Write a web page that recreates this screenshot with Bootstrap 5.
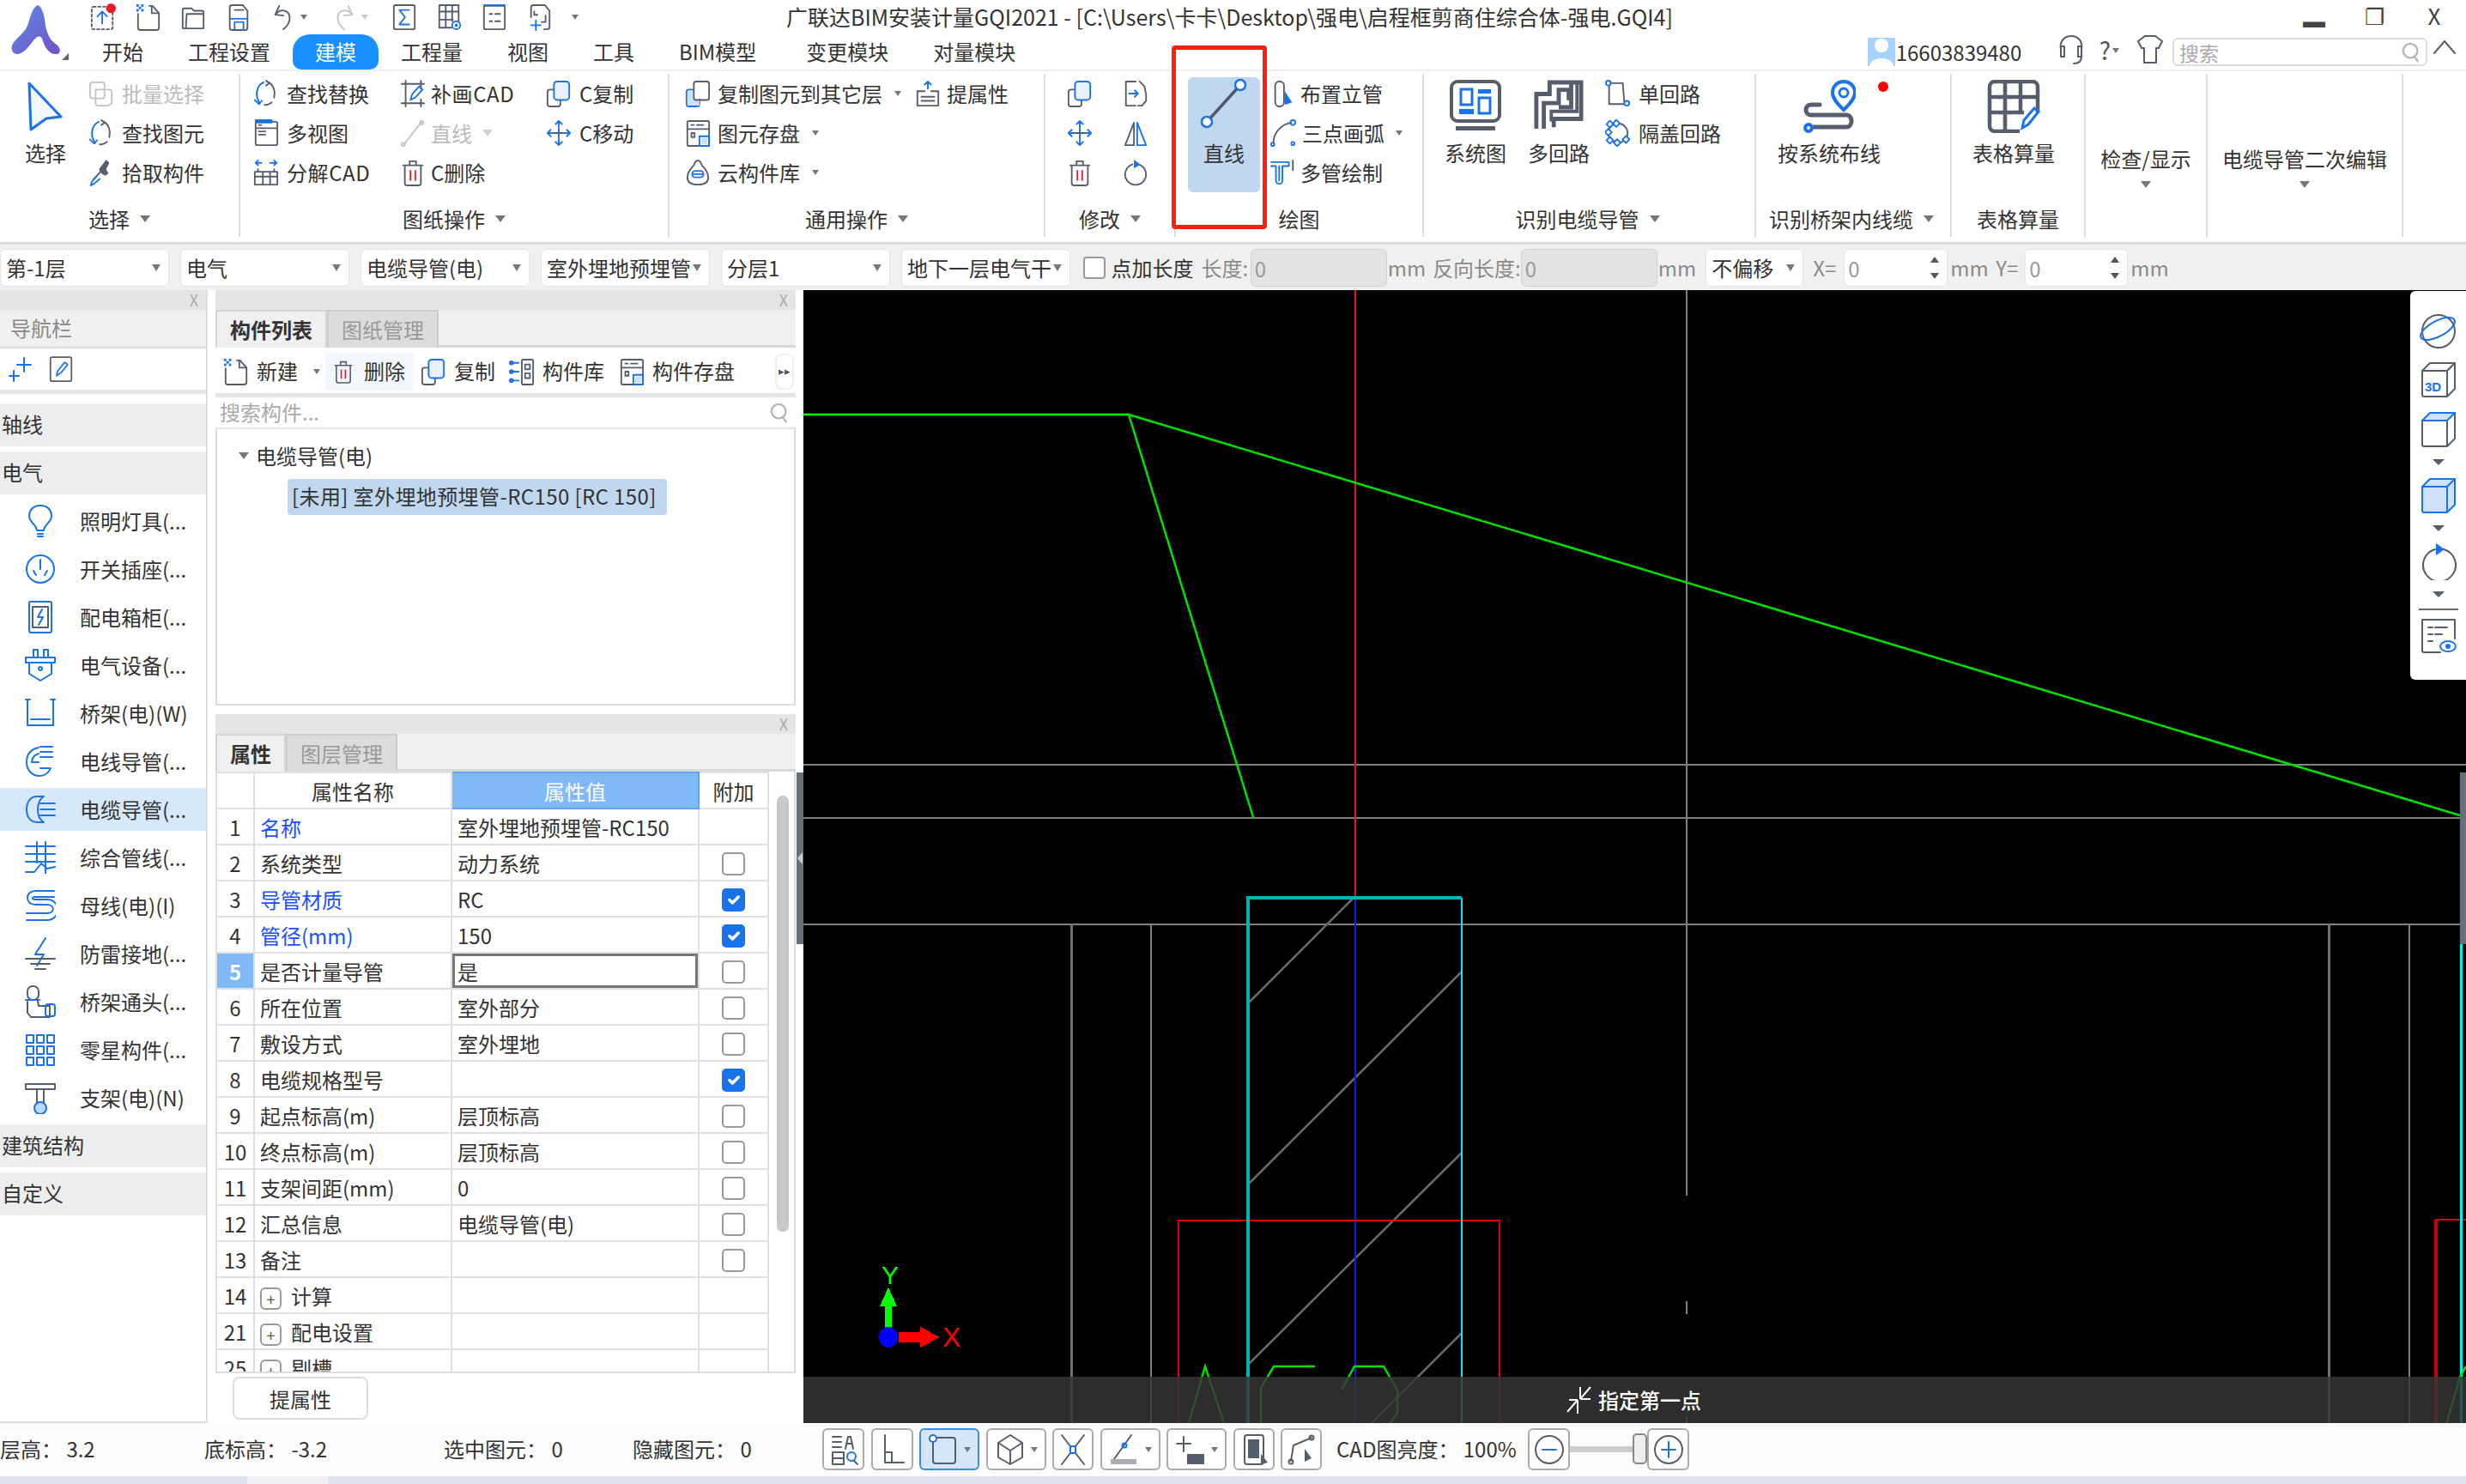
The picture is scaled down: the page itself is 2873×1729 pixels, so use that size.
<!DOCTYPE html>
<html lang="zh-CN">
<head>
<meta charset="utf-8">
<title>广联达BIM安装计量GQI2021</title>
<link rel="stylesheet" href="https://cdn.jsdelivr.net/npm/bootstrap@5.3.0/dist/css/bootstrap.min.css">
<style>
html,body{width:2873px;height:1729px;overflow:hidden}
body{font-family:"Noto Sans CJK SC","Noto Sans",sans-serif;font-size:24px;line-height:1.2;color:#333;background:#fff}
.i-d{fill:none;stroke:#565d6d;stroke-width:2;stroke-linejoin:round;stroke-linecap:round}
.i-t{fill:none;stroke:#565d6d;stroke-width:4}
.i-b{fill:none;stroke:#1a73e8;stroke-width:2;stroke-linejoin:round;stroke-linecap:round}
.i-g{fill:none;stroke:#c4c4c4;stroke-width:2;stroke-linejoin:round;stroke-linecap:round}
.i-r{fill:none;stroke:#e0202a;stroke-width:2}
.i-fb{fill:#1a73e8}.i-fl{fill:#cfe1f9}.i-fd{fill:#565d6d}.i-fw{fill:#fff}
.caret-d{display:inline-block;width:0;height:0;border-left:6px solid transparent;border-right:6px solid transparent;border-top:8px solid #777;flex:none}
.caret-s{border-left-width:4px;border-right-width:4px;border-top-width:6px}
.caret-u{display:block;width:0;height:0;border-left:5px solid transparent;border-right:5px solid transparent;border-bottom:7px solid #555}
.caret-dn{display:block;width:0;height:0;border-left:5px solid transparent;border-right:5px solid transparent;border-top:7px solid #555}

/* title + tabs */
.top-wrap{height:81px}
.logo-col{width:93px;flex:none;padding:6px 0 0 13px;position:relative}
.logo-col .caret-corner{position:absolute;left:72px;top:62px;width:0;height:0;border-left:8px solid transparent;border-bottom:8px solid #666}
.title-row{height:40px}
.quick{flex:0 0 823px;padding-left:12px;gap:22.5px}
.quick svg{width:30px;height:32px;flex:none}
.quick-w{width:48px;gap:5px}
.app-title{white-space:nowrap;padding-top:4px;font-size:25px;color:#333;width:1100px;flex:none}
.win-btns{margin-left:auto;padding-right:2px}
.win-b{width:70px;text-align:center;color:#444;font-size:26px;line-height:36px}
.tab-row{height:41px}
.rtabs .nav-link{padding:0 26px;height:41px;line-height:40px;color:#333;font-size:24px;white-space:nowrap}
.rtabs .nav-link.wide{padding-right:32px}
.rtabs .nav-link.active{background:#1890ff;color:#fff;border-radius:20px 20px 10px 10px}
.user-zone{margin-left:auto;padding-right:11px;height:41px}
.avatar{width:32px;height:33px;background:#a9d3ff;flex:none;display:block;margin-top:4px}
.ph{margin-left:1px;width:163px;color:#333;line-height:42px}
.top-search{width:297px;height:33px;margin:4px 6px 0 11px;border:2px solid #ddd;border-radius:6px;color:#aaa;padding:0 6px;justify-content:space-between;background:#fff}
.top-search span{font-size:23px;line-height:28px}

/* ribbon */
.ribbon{height:204px;border-top:2px solid #eee;border-bottom:3px solid #d8d8d8;padding-top:3px;position:relative;background:#fff}
.rb-group{height:190px;border-right:2px solid #dcdcdc;flex:none;position:relative}
.rb-body{height:150px}
.rb-label{height:38px;color:#333;gap:12px;white-space:nowrap}
.rb-col{display:flex;flex-direction:column;flex:none}
.rb-it{height:46px;display:flex;align-items:center;gap:9px;white-space:nowrap;flex:none}
.rb-it svg{width:30px;height:32px;flex:none}
.rb-it .caret-d{margin-left:6px}
.rb-off{color:#bbb}
.ls{letter-spacing:.6px}
.big{display:flex;flex-direction:column;align-items:center;padding-top:8px;flex:none;white-space:nowrap}
.big-ico{height:60px;display:flex;align-items:center;justify-content:center;margin-bottom:10px}
.big-hl{background:#c0d7f0;border-radius:6px;width:84px;height:134px;margin-top:4px;padding-top:2px}
.alert-dot{position:absolute;left:142px;top:9px;width:12px;height:12px;border-radius:50%;background:#f00}
.red-box{position:absolute;left:1365px;width:111px;height:214px;border:5px solid #ff2015;border-radius:4px;pointer-events:none}

/* property toolbar */
.prop-bar{height:53px;background:#f0f0f0;padding:1px 0 0;align-items:center}
.tb-sel{width:196.5px;height:44px;font-size:24px;line-height:1.2;color:#333;padding:0 20px 0 6px;border:1px solid #e4e4e4;border-radius:6px;flex:none;background-position:right 8px center;background-size:12px 8px;background-image:url("data:image/svg+xml,%3csvg xmlns='http://www.w3.org/2000/svg' viewBox='0 0 12 8'%3e%3cpath fill='%23777' d='M1 0h10L6 8z'/%3e%3c/svg%3e")}
.tb-gap{margin-right:13.5px}
.tb-check.form-check-input{width:26px;height:26px;margin:0 7px 0 15px;border:2px solid #999;border-radius:4px;flex:none;background-color:#fff}
.tb-g{color:#8a8a8a;white-space:nowrap}
.tb-inp.form-control{height:44px;font-size:24px;color:#999;padding:0 4px;border-radius:6px;flex:none;border:1px solid #e4e4e4;background:#fff}
.tb-inp.form-control:disabled{background:#e3e3e3;border-color:#c9d2de}
.spin-w{position:relative;flex:none}
.spin{position:absolute;right:10px;top:9px;height:26px;display:flex;flex-direction:column;justify-content:space-between}

/* workspace */
.workspace{height:1320px}
.left-col{width:242px;flex:none;border-right:2px solid #ddd;border-bottom:2px solid #ddd;height:1320px}
.pan-head{height:23px;background:#e5e5e5;justify-content:flex-end;padding-right:9px;color:#aaa;font-size:18px;line-height:23px}
.nav-title{height:45px;background:#f0f0f0;border-bottom:2px solid #ddd;color:#888;padding-left:12px;line-height:42px}
.nav-tools{height:53px;border-bottom:5px solid #e4e4e4;padding-left:10px;gap:19px}
.nav-tools svg{width:28px;height:32px}
.sect{height:50px;background:#ededed;padding-left:2px;line-height:48px;color:#333}
.sect-a{margin-top:11px}.sect-b{margin-top:6px}
.nav-list.list-group{--bs-list-group-bg:transparent;border-radius:0;margin-top:6px}
.nav-list .list-group-item{height:50px;margin-bottom:6px;padding:0 0 0 29px;border:0;display:flex;align-items:center;gap:28px;color:#333;white-space:nowrap;background:transparent}
.nav-list .list-group-item.active{background:#d6e8fb;color:#333;margin-top:0}
.nav-list svg{width:36px;height:38px;flex:none}
.gutter{width:9px;flex:none}
.mid-col{width:676px;flex:none;height:1320px}
.ptabs.nav-tabs{height:44px;background:#f0f0f0;border-bottom:3px solid #d8d8d8;--bs-nav-tabs-border-width:0}
.ptabs .nav-link{height:44px;width:130px;padding:0;line-height:42px;text-align:center;font-size:24px;color:#999;background:#dcdcdc;border:2px solid #ccc;border-radius:0;border-bottom:0}
.ptabs .nav-link.active{color:#333;font-weight:700;background:#f0f0f0;border-color:#d4d4d4;margin:0}
.ptabs.short .nav-link.active{width:82px}
.mid-tools{height:56px;border-bottom:5px solid #e4e4e4;padding:0 2px 0 9px;margin-top:2px;align-items:center;position:relative}
.mid-tools .t-it{display:flex;align-items:center;gap:9px;height:44px;white-space:nowrap;flex:none}
.mid-tools svg{width:30px;height:34px;flex:none}
.mid-tools .t-hover{background:#f2f8fe;border-radius:4px;padding:0 8px 0 9px;width:104px;gap:11px}
.mid-tools .t-hover svg{width:26px}
.more-b{position:absolute;right:2px;top:5px;width:22px;height:42px;border:2px solid #eee;border-radius:8px;text-align:center;line-height:36px;font-size:13px;color:#555}
.mid-search{height:37px;padding:0 8px 0 5px;border-bottom:2px solid #e4e4e4;color:#aaa;justify-content:space-between;align-items:center;margin-top:0}
.tree{height:322px;border:2px solid #ddd;border-top:0;padding:10px 0 0 25px}
.tree-top{height:42px;gap:8px;display:flex;align-items:center}
.tree-sel{margin:6px 0 0 57px;width:442px;height:42px;background:#c0d7f0;border-radius:4px;line-height:40px;padding-left:5px;white-space:nowrap;color:#333;letter-spacing:.4px}
.pan-b{margin-top:10px}
.prop-wrap{height:701px;border-bottom:2px solid #ddd;border-right:2px solid #ddd;overflow:hidden;position:relative}
.prop-table.table{width:643px;table-layout:fixed;margin:0;--bs-table-border-color:#e0e0e0;color:#333;border-collapse:collapse}
.prop-table.table>*>*>*{height:42px;padding:1px 6px 0;border-width:2px;vertical-align:middle;white-space:nowrap;overflow:hidden;line-height:38px;font-weight:400;color:#333}
.prop-table.table>*>*>.num{text-align:center;padding:1px 0 0}
.prop-table.table>*>*>.lnk{color:#1a50ff}
.prop-table.table>*>*>.hd-act{background:#7fb9f8;color:#fff;text-align:center;border:2px solid #5ea4ee}
.prop-table.table>*>*>.num-act{background:#7fb9f8;color:#fff;font-weight:700}
.prop-table.table>*>*>.edit{box-shadow:inset 0 0 0 3px #777}
.prop-table.table>*>*>.chk{text-align:center;padding:0}
.prop-table .form-check-input{width:27px;height:27px;margin:7px 0 0;border:2px solid #999;border-radius:5px;float:none;opacity:1}
.prop-table .form-check-input:checked{background-color:#1a73e8;border-color:#1a73e8}
.plus{display:inline-flex;width:25px;height:26px;border:2px solid #999;border-radius:6px;align-items:center;justify-content:center;font-size:18px;line-height:1;margin-right:11px;color:#555;vertical-align:middle}
.scr-thumb{position:absolute;left:654px;top:28px;width:14px;height:508px;background:#c8c8c8;border-radius:7px 7px 6px 6px}
.prop-btn.btn{width:158px;height:50px;margin:4px 0 0 20px;padding:2px 0 0;border:2px solid #ddd;border-radius:8px;font-size:24px;color:#333;background:#fff}
.split-w{width:9px;flex:none;padding-top:562px}
.split{height:200px;width:8px;margin-left:1px;background:#66707a;display:flex;align-items:center;justify-content:center}
.canvas-w{flex:1 1 auto;position:relative;background:#000;height:1320px;overflow:hidden}
.canvas-w>svg{display:block;width:1937px;height:1320px}
.cmd{position:absolute;left:0;right:0;bottom:0;height:54px;background:rgba(54,54,54,.83);color:#fff;display:flex;align-items:center;padding-left:889px;gap:7px;font-weight:500}
.r-split{position:absolute;right:0;top:562px;width:7px;height:200px;background:#66707a}
.view-strip{position:absolute;right:0;top:1px;width:65px;height:453px;background:#fff;border-radius:6px 0 0 6px;display:flex;flex-direction:column;align-items:center;padding-top:24px;padding-left:1px}
.view-strip svg{width:44px;height:44px;flex:none;display:block}
.view-strip .caret-dn{border-left-width:7px;border-right-width:7px;border-top-width:7px;margin:13px 0;border-top-color:#565d6d}
.vs-sep{width:46px;border-top:2px solid #666;margin:0 0 8px}

/* status */
.status-b{height:62px;background:#fcfcfc;align-items:flex-start}
.st-txt{white-space:nowrap;line-height:60px;flex:none}
.st-btn.btn{height:49px;margin-top:6px;padding:0;border:2px solid #aaa;border-radius:6px;flex:none;background:#fff;display:flex;align-items:center;justify-content:center;gap:6px}
.st-btn.btn.on{background:#d5e5fa;border-color:#3b8beb}
.st-btn svg{width:36px;height:38px;flex:none}
.track{width:73px;height:7px;background:#ccc;margin-top:27px;flex:none}
.thumb-v{width:17px;height:36px;margin-top:12px;background:#eee;border:2px solid #888;border-radius:5px;flex:none}
.strip{height:9px;background:#dfe3ee}
.strip i{display:block;width:95px;height:9px;margin-left:288px;background:#eef0f6}
</style>
</head>
<body>
<svg class="d-none" xmlns="http://www.w3.org/2000/svg">
<symbol id="s-up" viewBox="0 0 32 34"><rect class="i-d" x="2" y="4" width="26" height="28" rx="2" stroke-dasharray="3 3"/><path class="i-b" stroke-width="3" d="M15 25V11M9 16l6-6 6 6"/><circle cx="26" cy="6" r="6" fill="#f0182a"/></symbol>
<symbol id="s-new" viewBox="0 0 32 34"><path class="i-d" d="M17 3h4l8 9v18a3 3 0 0 1-3 3H6a3 3 0 0 1-3-3V13"/><path class="i-d" d="M20 3v9h9"/><rect class="i-fb" x="1" y="1" width="3" height="3"/><rect class="i-fb" x="7" y="1" width="3" height="3"/><rect class="i-fb" x="4" y="4" width="3" height="3"/><rect class="i-fb" x="1" y="7" width="3" height="3"/><rect class="i-fb" x="7" y="7" width="3" height="3"/></symbol>
<symbol id="s-open" viewBox="0 0 32 34"><path class="i-d" d="M3 30V8a2 2 0 0 1 2-2h9l3 3h10a2 2 0 0 1 2 2v19a1 1 0 0 1-1 1H4a1 1 0 0 1-1-1zM7 30l1-17h21"/></symbol>
<symbol id="s-save" viewBox="0 0 32 34"><path class="i-d" d="M8 2h13l6 7v21a3 3 0 0 1-3 3H8a3 3 0 0 1-3-3V5a3 3 0 0 1 3-3zM11 8h11"/><path class="i-b" d="M5 19h22M11 33V23h11v10"/></symbol>
<symbol id="s-undo" viewBox="0 0 32 34"><path class="i-d" d="M11 3L6 14l10 1M7 13c7-8 17-4 17 5 0 6-4 11-8 14"/></symbol>
<symbol id="s-redo" viewBox="0 0 32 34"><path class="i-g" d="M21 3l5 11-10 1M25 13c-7-8-17-4-17 5 0 6 4 11 8 14"/></symbol>
<symbol id="s-sig" viewBox="0 0 32 34"><rect class="i-d" x="3" y="2" width="26" height="30" rx="2"/><path class="i-b" stroke-width="2.5" d="M22 8H10l7 9-7 9h12"/></symbol>
<symbol id="s-tbl" viewBox="0 0 32 34"><path class="i-d" d="M3 2h24v20M3 2v28h15M3 10h24M3 20h17M11 2v28M19 2v20"/><circle class="i-b" cx="24" cy="27" r="5"/><circle class="i-fb" cx="24" cy="27" r="2"/></symbol>
<symbol id="s-lst" viewBox="0 0 32 34"><rect class="i-d" x="3" y="3" width="26" height="29" rx="2"/><path class="i-b" stroke-width="3" d="M3 2h26"/><path class="i-d" d="M10 13h3M17 13h6M10 22h3M17 22h6"/></symbol>
<symbol id="s-crop" viewBox="0 0 32 34"><path class="i-d" d="M8 2h14l6 7v20a3 3 0 0 1-3 3h-4M8 2a3 3 0 0 0-3 3v12M9 10v4h4M23 15v8h-5"/><path class="i-b" stroke-width="3" d="M11 21v12M5 27h12"/></symbol>
<symbol id="s-sel" viewBox="0 0 42 58"><path fill="#f2f7fe" stroke="#1a73e8" stroke-width="3" stroke-linejoin="round" d="M2 2l37 39-17 2L4 56z"/></symbol>
<symbol id="s-batch" viewBox="0 0 32 34"><rect class="i-g" x="2" y="3" width="18" height="20" rx="3"/><path class="i-g" d="M9 12h17a3 3 0 0 1 3 3v14l-4 3H12a3 3 0 0 1-3-3z"/></symbol>
<symbol id="s-find" viewBox="0 0 32 34"><path class="i-b" d="M13 3C6 6 3 14 5 22l3 8"/><path class="i-d" d="M19 3c6 3 9 11 7 19M14 31c4 1 7-2 9-3"/><path class="i-b" d="M2 25l5 5 4-4"/><path class="i-d" d="M16 1l4 3-4 3"/></symbol>
<symbol id="s-pick" viewBox="0 0 32 34"><path class="i-fd" d="M22 1l4 4-4 8 3 5-4 3-5-3-3-5z"/><path class="i-d" stroke-width="3" d="M17 14L6 26"/><path class="i-b" stroke-width="3" d="M10 22l-6 7-1 4 4-2 7-6"/></symbol>
<symbol id="s-cad" viewBox="0 0 32 34"><path class="i-d" d="M2 5h28M2 29h28M7 1v32M26 1v10M26 24v9"/><path class="i-b" d="M13 25l2-7 9-10 4 4-9 10z"/></symbol>
<symbol id="s-mv" viewBox="0 0 32 34"><rect class="i-d" x="3" y="3" width="27" height="29" rx="2"/><rect class="i-b" x="3" y="1" width="20" height="3"/><path class="i-d" d="M3 11h26M7 7h3M7 15h8M7 19h8"/></symbol>
<symbol id="s-lg" viewBox="0 0 32 34"><path class="i-g" stroke-width="2.5" d="M27 3L5 31"/><circle class="i-g" cx="27" cy="4" r="2"/><circle class="i-g" cx="4" cy="31" r="2"/></symbol>
<symbol id="s-split" viewBox="0 0 32 34"><path class="i-b" d="M10 5H3M3 5l3-3M3 5l3 3M21 5h8M29 5l-3-3M29 5l-3 3"/><path class="i-d" d="M2 16h28v16H2zM2 22h28M12 16v16M21 16v16M6 16v-3M26 16v-3"/></symbol>
<symbol id="s-del" viewBox="0 0 32 34"><path class="i-d" d="M4 8h24M12 8V3h8v5M6 8v22a3 3 0 0 0 3 3h14a3 3 0 0 0 3-3V8"/><path class="i-r" d="M13 14v13M19 14v13"/></symbol>
<symbol id="s-copy" viewBox="0 0 32 34"><path class="i-d" d="M10 12H5a3 3 0 0 0-3 3v15a3 3 0 0 0 3 3h10a3 3 0 0 0 3-3v-6"/><rect class="i-b" stroke-width="2.5" x="10" y="2" width="19" height="23" rx="4" style="fill:#e8f1fd"/></symbol>
<symbol id="s-copyf" viewBox="0 0 32 34"><path class="i-b" d="M10 12H5a3 3 0 0 0-3 3v15a3 3 0 0 0 3 3h10a3 3 0 0 0 3-3v-6"/><path class="i-fl" d="M3 14h7v11h8v7H3z"/><rect class="i-d" x="11" y="2" width="19" height="23" rx="3"/></symbol>
<symbol id="s-move" viewBox="0 0 32 34"><path class="i-b" d="M16 2v30M2 17h28M12 6l4-4 4 4M12 28l4 4 4-4M6 13l-4 4 4 4M26 13l4 4-4 4"/><path class="i-d" d="M11 17h10"/></symbol>
<symbol id="s-store" viewBox="0 0 32 34"><rect class="i-d" x="3" y="2" width="27" height="31" rx="2"/><path class="i-d" d="M3 12h27M8 7h3M15 7h8M8 17h4v5H8z"/><rect class="i-b" x="18" y="21" width="12" height="12"/><rect class="i-fl" x="20" y="23" width="8" height="8"/></symbol>
<symbol id="s-cloud" viewBox="0 0 32 34"><path class="i-d" d="M16 2c3 0 4 3 5 6 3 3 8 8 8 15 0 6-4 9-13 9S3 29 3 23c0-7 5-12 8-15 1-3 2-6 5-6z"/><rect class="i-b" x="9" y="15" width="14" height="8" rx="4"/><path class="i-b" d="M10 19h12"/></symbol>
<symbol id="s-prop" viewBox="0 0 32 34"><path class="i-b" stroke-width="2.5" d="M16 11V2M12 6l4-4 4 4"/><path class="i-d" d="M12 14H3v18h26V14h-9M8 21h16M8 26h16"/></symbol>
<symbol id="s-flip" viewBox="0 0 32 34"><path class="i-d" d="M16 2H4v30h12M21 2l6 6 2 10v8l-5 6h-5"/><path class="i-b" d="M8 17h11M15 13l4 4-4 4"/></symbol>
<symbol id="s-mir" viewBox="0 0 32 34"><path class="i-d" stroke-width="2.5" d="M14 4L3 32h11z"/><path class="i-b" stroke-width="2.5" d="M18 4l11 28H18z"/></symbol>
<symbol id="s-rot" viewBox="0 0 32 34"><path class="i-d" d="M12 7a13 13 0 1 0 8 0"/><path class="i-fb" d="M14 1l8 6-8 5z"/></symbol>
<symbol id="s-riser" viewBox="0 0 32 34"><rect class="i-d" x="6" y="2" width="11" height="31" rx="5"/><path class="i-fb" d="M18 14l9 14-9 3z"/></symbol>
<symbol id="s-arc" viewBox="0 0 32 34"><path class="i-d" stroke-width="2.5" d="M4 28C4 16 14 6 26 4"/><circle class="i-b" cx="28" cy="4" r="3"/><circle class="i-b" cx="3" cy="31" r="2"/><circle class="i-b" cx="28" cy="30" r="2"/></symbol>
<symbol id="s-mpipe" viewBox="0 0 32 34"><path class="i-b" stroke-width="2.5" d="M1 4h22v5h-8v18a4 4 0 0 1-8 0V9H1"/><path class="i-b" d="M11 9v18"/><path class="i-d" d="M28 2v12"/></symbol>
<symbol id="s-1loop" viewBox="0 0 32 34"><path class="i-d" d="M5 4h17l2 26H5z"/><circle class="i-b" cx="4" cy="4" r="3" style="fill:#fff"/><circle class="i-b" cx="27" cy="29" r="3" style="fill:#fff"/></symbol>
<symbol id="s-sep" viewBox="0 0 32 34"><circle class="i-d" stroke-width="2" cx="16" cy="17" r="12"/><g class="i-b" stroke-width="2"><rect x="3" y="3" width="6" height="6" transform="rotate(45 6 6)" style="fill:#fff"/><rect x="11" y="2" width="6" height="6" transform="rotate(45 14 5)" style="fill:#fff"/><rect x="1" y="13" width="6" height="6" transform="rotate(45 4 16)" style="fill:#fff"/><rect x="3" y="23" width="6" height="6" transform="rotate(45 6 26)" style="fill:#fff"/><rect x="12" y="26" width="6" height="6" transform="rotate(45 15 29)" style="fill:#fff"/><rect x="23" y="22" width="6" height="6" transform="rotate(45 26 25)" style="fill:#fff"/></g></symbol>
<symbol id="s-sys" viewBox="0 0 60 62"><rect fill="none" stroke="#565d6d" stroke-width="4" x="2" y="2" width="56" height="46" rx="7"/><path class="i-fd" d="M7 54h46v5H7z"/><rect fill="none" stroke="#1a73e8" stroke-width="3" x="13" y="11" width="13" height="18"/><rect class="i-fb" x="11" y="34" width="17" height="6"/><rect class="i-fb" x="33" y="11" width="15" height="5"/><rect fill="none" stroke="#1a73e8" stroke-width="3" x="34" y="21" width="13" height="18"/></symbol>
<symbol id="s-mloop" viewBox="0 0 60 62"><path fill="none" stroke="#565d6d" stroke-width="5" d="M3 58V16h16V2h38v44H24v10"/><path fill="none" stroke="#565d6d" stroke-width="5" d="M12 58V27h18V11h12v10H46M45 2v30H30"/><path fill="none" stroke="#565d6d" stroke-width="4" d="M52 2v35H21v12"/></symbol>
<symbol id="s-route" viewBox="0 0 62 62"><path fill="none" stroke="#565d6d" stroke-width="5" stroke-linecap="round" d="M20 29H10C2 29 2 41 10 41h41c8 0 8 14 0 14H13"/><path fill="none" stroke="#1a73e8" stroke-width="4" d="M48 2c-7 0-13 5-13 13 0 8 8 15 13 20 5-5 13-12 13-20 0-8-6-13-13-13z"/><circle fill="none" stroke="#1a73e8" stroke-width="3" cx="48" cy="15" r="5"/><circle fill="#fff" stroke="#1a73e8" stroke-width="4" cx="7" cy="56" r="4"/></symbol>
<symbol id="s-gt" viewBox="0 0 60 62"><path fill="none" stroke="#565d6d" stroke-width="4.5" d="M37 60H8a6 6 0 0 1-6-6V8a6 6 0 0 1 6-6h44a6 6 0 0 1 6 6v30M2 20h56M2 38h40M20 2v58M38 2v36"/><path fill="none" stroke="#1a73e8" stroke-width="3" d="M40 56l2-9 12-14 5 4-12 15z"/></symbol>
<symbol id="s-spark" viewBox="0 0 28 32"><path class="i-b" stroke-width="3" d="M18 3v16M10 11h16M6 18v12M1 24h11"/></symbol>
<symbol id="s-edit" viewBox="0 0 32 34"><rect class="i-d" x="2" y="1" width="28" height="32" rx="2"/><path class="i-b" d="M10 26l2-7 9-11 4 3-9 11z"/></symbol>
<symbol id="s-lib" viewBox="0 0 32 34"><rect class="i-d" x="16" y="2" width="14" height="31" rx="2"/><rect class="i-d" x="20" y="8" width="6" height="6"/><rect class="i-d" x="20" y="19" width="6" height="6"/><path class="i-b" d="M2 6h10M2 17h10M2 28h10"/><circle class="i-b" cx="3" cy="6" r="2"/><circle class="i-b" cx="3" cy="17" r="2"/><circle class="i-b" cx="3" cy="28" r="2"/></symbol>
<symbol id="s-bulb" viewBox="0 0 36 38"><path class="i-b" d="M18 1C9 1 5 7 5 13c0 8 8 9 9 17h8c1-8 9-9 9-17 0-6-4-12-13-12zM15 34h6"/><path class="i-b" stroke-width="3" d="M15 37h6"/></symbol>
<symbol id="s-sock" viewBox="0 0 36 38"><circle class="i-b" cx="18" cy="19" r="16"/><path class="i-b" d="M18 8v11M10 21l3 5M26 21l-3 5"/></symbol>
<symbol id="s-box" viewBox="0 0 36 38"><rect class="i-b" x="5" y="1" width="26" height="36" rx="2" stroke-width="2.5"/><rect class="i-d" x="9" y="7" width="18" height="24"/><path class="i-b" d="M20 10l-5 9h6l-5 9"/></symbol>
<symbol id="s-plug" viewBox="0 0 36 38"><path class="i-b" stroke-width="2.5" d="M10 1v9h5V1zM22 1v9h5V1zM1 10h34v6H1zM5 16v13l13 8 13-8V16"/><circle class="i-b" cx="18" cy="23" r="2"/></symbol>
<symbol id="s-tray" viewBox="0 0 36 38"><path class="i-b" stroke-width="3" d="M3 3v30h30V3M1 3h5M30 3h5M7 26h22"/></symbol>
<symbol id="s-wire" viewBox="0 0 36 38"><path class="i-b" stroke-width="2.5" d="M16 3C7 5 2 11 2 20c0 10 7 16 15 16 7 0 11-4 13-9M16 20h-8c0-4 2-8 8-10M18 2h14M18 8h14M18 14h14M28 27h-10"/></symbol>
<symbol id="s-cable" viewBox="0 0 36 38"><path class="i-b" stroke-width="2.5" d="M22 4H14C6 4 2 11 2 19s4 15 12 15h8M22 4c-5 3-7 9-7 15s2 12 7 15"/><path class="i-b" stroke-width="2.5" d="M18 12h17M18 19h17M18 26h17"/></symbol>
<symbol id="s-comb" viewBox="0 0 36 38"><path class="i-b" stroke-width="2.5" d="M1 6h34M1 15h34M1 24h34M14 1v24M24 1v37M1 36h10l8-10 7 6 9-2"/></symbol>
<symbol id="s-bus" viewBox="0 0 36 38"><path class="i-b" stroke-width="2.5" d="M34 2H12C0 2 0 18 12 18h14c9 0 9 10 0 10H2M34 9H12c-4 0-4 3 0 3h14c16 0 16 24 0 24H2"/></symbol>
<symbol id="s-lit" viewBox="0 0 36 38"><path class="i-b" stroke-width="2.5" d="M24 1L12 20h10L14 33"/><path class="i-d" d="M1 25h34M7 31h22M12 37h12"/></symbol>
<symbol id="s-elb" viewBox="0 0 36 38"><rect class="i-d" x="3" y="1" width="13" height="16" rx="6"/><path class="i-b" stroke-width="3" d="M1 17h16"/><path class="i-d" d="M3 19v13l4 5h22V24H16l-1-6"/><rect class="i-b" x="24" y="22" width="11" height="14" rx="3"/></symbol>
<symbol id="s-grid" viewBox="0 0 36 38"><g class="i-b" stroke-width="2.5"><rect x="2" y="2" width="8" height="9"/><rect x="14" y="2" width="8" height="9"/><rect x="26" y="2" width="8" height="9"/><rect x="2" y="15" width="8" height="9"/><rect x="14" y="15" width="8" height="9"/><rect x="26" y="15" width="8" height="9"/><rect x="2" y="28" width="8" height="9"/><rect x="14" y="28" width="8" height="9"/><rect x="26" y="28" width="8" height="9"/></g></symbol>
<symbol id="s-t" viewBox="0 0 36 38"><path class="i-d" stroke-width="3" d="M1 3h34v6H1zM14 9v17M22 9v17"/><ellipse cx="18" cy="31" rx="7" ry="7" fill="#bcd8fa" stroke="#1a73e8" stroke-width="2"/></symbol>
<symbol id="s-q" viewBox="0 0 24 28"><circle fill="none" stroke="#b5b5b5" stroke-width="2.5" cx="11" cy="12" r="9"/><path fill="none" stroke="#b5b5b5" stroke-width="2.5" d="M16 19l5 7"/></symbol>
<symbol id="s-orbit" viewBox="0 0 44 44"><circle class="i-d" cx="22" cy="23" r="19"/><ellipse class="i-b" stroke-width="2.5" cx="21" cy="20" rx="22" ry="9" transform="rotate(-28 21 20)"/></symbol>
<symbol id="s-3d" viewBox="0 0 44 44"><path class="i-d" d="M3 12L12 3h29v30l-9 9H5a2 2 0 0 1-2-2zM3 12h29v30M32 12l9-9"/><text x="6" y="36" font-family="Liberation Sans,sans-serif" font-weight="700" font-size="15" fill="#1a73e8">3D</text></symbol>
<symbol id="s-ctop" viewBox="0 0 44 44"><path class="i-fl" d="M3 12L12 3h29l-9 9z"/><path class="i-d" d="M3 12v28a2 2 0 0 0 2 2h27l9-9V3M32 12v30"/><path class="i-b" d="M3 12L12 3h29l-9 9z"/></symbol>
<symbol id="s-cfull" viewBox="0 0 44 44"><path class="i-fl" d="M3 12L12 3h29v30l-9 9H3z"/><path class="i-b" stroke-width="2.5" d="M3 12L12 3h29v30l-9 9H5a2 2 0 0 1-2-2zM3 12h29v30M32 12l9-9"/></symbol>
<symbol id="s-rotv" viewBox="0 0 44 44"><path class="i-d" d="M18 8a19 19 0 1 0 10 0"/><path class="i-fb" d="M19 1l10 7-10 7z"/></symbol>
<symbol id="s-doce" viewBox="0 0 44 44"><path class="i-d" d="M24 41H5a2 2 0 0 1-2-2V3h38v22M10 12h5M18 12h14M10 20h5M18 20h8M10 28h5"/><ellipse class="i-b" cx="33" cy="34" rx="9" ry="6"/><circle class="i-fb" cx="33" cy="34" r="3"/></symbol>
<symbol id="b-a" viewBox="0 0 36 38"><path class="i-d" d="M5 4h10M5 10h10M5 16h10M20 18l3-14h3l3 14M21 12h7M5 36V22h13v14zM5 29h13"/><circle class="i-b" cx="27" cy="27" r="5"/><path class="i-d" d="M30 32l4 4"/></symbol>
<symbol id="b-l" viewBox="0 0 36 38"><path class="i-d" d="M10 2v32h22M10 22h8v12"/></symbol>
<symbol id="b-r" viewBox="0 0 36 38"><rect class="i-d" x="6" y="5" width="26" height="30" rx="3"/><circle cx="6" cy="6" r="4" fill="#fff" stroke="#1a73e8" stroke-width="2"/></symbol>
<symbol id="b-c" viewBox="0 0 36 38"><path class="i-d" d="M18 2l14 9v17l-14 8-14-8V11zM4 11l14 9 14-9M18 20v16"/></symbol>
<symbol id="b-x" viewBox="0 0 36 38"><path class="i-d" d="M5 2l26 34M31 2L5 36"/><rect x="15" y="15" width="6" height="8" fill="#fff" stroke="#1a73e8" stroke-width="2"/></symbol>
<symbol id="b-ang" viewBox="0 0 36 38"><path class="i-d" d="M26 2L6 30"/><circle cx="18" cy="14" r="2.5" class="i-b"/><rect x="2" y="30" width="30" height="6" fill="#a9adb6"/></symbol>
<symbol id="b-plus" viewBox="0 0 36 38"><path class="i-d" d="M10 4v17M2 12h16"/><rect x="14" y="24" width="20" height="12" fill="#565d6d"/></symbol>
<symbol id="b-ph" viewBox="0 0 36 38"><rect class="i-d" x="7" y="2" width="22" height="34" rx="3"/><rect x="11" y="7" width="13" height="22" fill="#565d6d"/><path class="i-fd" d="M26 24l8 10-8 2z"/></symbol>
<symbol id="b-arc" viewBox="0 0 36 38"><path class="i-d" d="M6 32l3-18L30 5"/><circle cx="30" cy="5" r="2.5" class="i-d"/><circle cx="6" cy="33" r="2.5" class="i-d"/><path class="i-fd" d="M22 18l8 11-8 4z"/></symbol>
<symbol id="b-min" viewBox="0 0 36 38"><circle class="i-d" cx="18" cy="19" r="16"/><path class="i-b" stroke-width="3" d="M10 19h16"/></symbol>
<symbol id="b-pls" viewBox="0 0 36 38"><circle class="i-d" cx="18" cy="19" r="16"/><path class="i-b" stroke-width="3" d="M10 19h16M18 10v18"/></symbol>
</svg>

<header class="top-wrap d-flex">
  <div class="logo-col">
    <svg width="58" height="58" viewBox="0 0 58 58" aria-label="logo">
      <defs><linearGradient id="lg" x1="0" y1="0" x2="1" y2="1"><stop offset="0" stop-color="#5c8ee8"/><stop offset="1" stop-color="#7250c4"/></linearGradient></defs>
      <path fill="url(#lg)" d="M31 0c5 1 8 13 9 24 2 10 6 18 13 22 5 4 5 11 0 11-7 1-13-6-16-15-1-5-4-7-8-4-5 4-9 14-18 18-7 3-12-2-10-9 2-6 10-11 16-19 5-8 6-25 14-28z"/>
    </svg>
    <span class="caret-corner"></span>
  </div>
  <div class="flex-grow-1 d-flex flex-column">
    <div class="title-row d-flex">
      <div class="quick d-flex align-items-center">
        <svg><use href="#s-up"/></svg><svg><use href="#s-new"/></svg><svg><use href="#s-open"/></svg><svg><use href="#s-save"/></svg>
        <div class="quick-w d-flex align-items-center"><svg><use href="#s-undo"/></svg><span class="caret-d caret-s"></span></div>
        <div class="quick-w d-flex align-items-center"><svg><use href="#s-redo"/></svg><span class="caret-d caret-s" style="opacity:.4"></span></div>
        <svg><use href="#s-sig"/></svg><svg><use href="#s-tbl"/></svg><svg><use href="#s-lst"/></svg><svg><use href="#s-crop"/></svg>
        <span class="caret-d caret-s"></span>
      </div>
      <div class="app-title">广联达BIM安装计量GQI2021 - [C:\Users\卡卡\Desktop\强电\启程框剪商住综合体-强电.GQI4]</div>
      <div class="win-btns d-flex">
        <span class="win-b">▂</span><span class="win-b">❐</span><span class="win-b">X</span>
      </div>
    </div>
    <div class="tab-row d-flex">
      <ul class="nav rtabs">
        <li class="nav-item"><a class="nav-link" href="#">开始</a></li>
        <li class="nav-item"><a class="nav-link" href="#">工程设置</a></li>
        <li class="nav-item"><a class="nav-link active" href="#">建模</a></li>
        <li class="nav-item"><a class="nav-link" href="#">工程量</a></li>
        <li class="nav-item"><a class="nav-link" href="#">视图</a></li>
        <li class="nav-item"><a class="nav-link" href="#">工具</a></li>
        <li class="nav-item"><a class="nav-link wide" href="#">BIM模型</a></li>
        <li class="nav-item"><a class="nav-link" href="#">变更模块</a></li>
        <li class="nav-item"><a class="nav-link" href="#">对量模块</a></li>
      </ul>
      <div class="user-zone d-flex">
        <svg class="avatar" viewBox="0 0 32 33"><circle cx="16" cy="9" r="8" fill="#fff"/><path d="M2 33c2-12 26-12 28 0z" fill="#fff"/></svg>
        <span class="ph">16603839480</span>
        <svg class="ms-4" width="34" height="36" viewBox="0 0 34 36"><path class="i-d" d="M5 18C3 8 9 2 17 2s14 6 12 16M20 34c6 0 9-3 9-8M5 14h4v12H5zM25 14h4v12h-4z"/></svg>
        <span class="ms-3" style="color:#555;font-size:28px;line-height:36px">?</span><span class="caret-d caret-s mt-3" style="margin-left:2px"></span>
        <svg width="30" height="36" viewBox="0 0 30 36" style="margin-left:21px"><path class="i-d" d="M9 2h12l8 6-4 8h-3v17H8V16H5L1 8z"/></svg>
        <div class="top-search d-flex align-items-center"><span>搜索</span><svg width="22" height="26"><use href="#s-q"/></svg></div>
        <svg width="28" height="34" viewBox="0 0 28 34"><path class="i-d" d="M2 22L14 8l12 14"/></svg>
      </div>
    </div>
  </div>
</header>

<section class="ribbon d-flex">
  <div class="rb-group" style="width:280px">
    <div class="rb-body d-flex">
      <div class="big" style="width:103px;padding-left:3px"><div class="big-ico"><svg width="42" height="58"><use href="#s-sel"/></svg></div>选择</div>
      <div class="rb-col">
        <div class="rb-it rb-off"><svg><use href="#s-batch"/></svg>批量选择</div>
        <div class="rb-it"><svg><use href="#s-find"/></svg>查找图元</div>
        <div class="rb-it"><svg><use href="#s-pick"/></svg>拾取构件</div>
      </div>
    </div>
    <div class="rb-label d-flex align-items-center justify-content-center">选择<span class="caret-d"></span></div>
  </div>
  <div class="rb-group" style="width:500px">
    <div class="rb-body d-flex" style="padding-left:15px">
      <div class="rb-col" style="width:171px">
        <div class="rb-it"><svg><use href="#s-find"/></svg>查找替换</div>
        <div class="rb-it"><svg><use href="#s-mv"/></svg>多视图</div>
        <div class="rb-it ls"><svg><use href="#s-split"/></svg>分解CAD</div>
      </div>
      <div class="rb-col" style="width:170px">
        <div class="rb-it ls" style="gap:6px"><svg><use href="#s-cad"/></svg>补画CAD</div>
        <div class="rb-it rb-off" style="gap:6px"><svg><use href="#s-lg"/></svg>直线<span class="caret-d" style="opacity:.35"></span></div>
        <div class="rb-it" style="gap:6px"><svg><use href="#s-del"/></svg>C删除</div>
      </div>
      <div class="rb-col">
        <div class="rb-it"><svg><use href="#s-copy"/></svg>C复制</div>
        <div class="rb-it"><svg><use href="#s-move"/></svg>C移动</div>
      </div>
    </div>
    <div class="rb-label d-flex align-items-center justify-content-center">图纸操作<span class="caret-d"></span></div>
  </div>
  <div class="rb-group" style="width:438px">
    <div class="rb-body d-flex" style="padding-left:18px">
      <div class="rb-col" style="width:268px">
        <div class="rb-it" style="gap:8px"><svg><use href="#s-copyf"/></svg>复制图元到其它层<span class="caret-d caret-s"></span></div>
        <div class="rb-it" style="gap:8px"><svg><use href="#s-store"/></svg>图元存盘<span class="caret-d caret-s"></span></div>
        <div class="rb-it" style="gap:8px"><svg><use href="#s-cloud"/></svg>云构件库<span class="caret-d caret-s"></span></div>
      </div>
      <div class="rb-col"><div class="rb-it" style="gap:7px"><svg><use href="#s-prop"/></svg>提属性</div></div>
    </div>
    <div class="rb-label d-flex align-items-center justify-content-center">通用操作<span class="caret-d"></span></div>
  </div>
  <div class="rb-group" style="width:152px">
    <div class="rb-body d-flex" style="padding-left:25px">
      <div class="rb-col" style="width:65px">
        <div class="rb-it"><svg><use href="#s-copy"/></svg></div>
        <div class="rb-it"><svg><use href="#s-move"/></svg></div>
        <div class="rb-it"><svg><use href="#s-del"/></svg></div>
      </div>
      <div class="rb-col">
        <div class="rb-it"><svg><use href="#s-flip"/></svg></div>
        <div class="rb-it"><svg><use href="#s-mir"/></svg></div>
        <div class="rb-it"><svg><use href="#s-rot"/></svg></div>
      </div>
    </div>
    <div class="rb-label d-flex align-items-center justify-content-center">修改<span class="caret-d"></span></div>
  </div>
  <div class="rb-group" style="width:289px">
    <div class="rb-body d-flex" style="padding-left:14px">
      <div class="big big-hl">
        <div class="big-ico" style="margin-bottom:12px"><svg width="54" height="62" viewBox="0 0 54 62"><path fill="none" stroke="#50586a" stroke-width="3.5" d="M8 50L46 8"/><circle cx="46" cy="8" r="6" fill="#fff" stroke="#1a73e8" stroke-width="2.5"/><circle cx="7" cy="51" r="6" fill="#fff" stroke="#1a73e8" stroke-width="2.5"/></svg></div>直线
      </div>
      <div class="rb-col ms-2">
        <div class="rb-it ps-1" style="gap:5px"><svg><use href="#s-riser"/></svg>布置立管</div>
        <div class="rb-it ps-1" style="gap:7px"><svg><use href="#s-arc"/></svg>三点画弧<span class="caret-d caret-s"></span></div>
        <div class="rb-it ps-1" style="gap:5px"><svg><use href="#s-mpipe"/></svg>多管绘制</div>
      </div>
    </div>
    <div class="rb-label d-flex align-items-center justify-content-center">绘图</div>
  </div>
  <div class="rb-group" style="width:387px">
    <div class="rb-body d-flex" style="padding-left:24px">
      <div class="big" style="width:72px"><div class="big-ico"><svg width="60" height="62"><use href="#s-sys"/></svg></div>系统图</div>
      <div class="big" style="width:72px;margin-left:25px"><div class="big-ico"><svg width="58" height="62"><use href="#s-mloop"/></svg></div>多回路</div>
      <div class="rb-col" style="margin-left:18px">
        <div class="rb-it"><svg><use href="#s-1loop"/></svg>单回路</div>
        <div class="rb-it"><svg><use href="#s-sep"/></svg>隔盖回路</div>
      </div>
    </div>
    <div class="rb-label d-flex align-items-center justify-content-center" style="padding-right:4px">识别电缆导管<span class="caret-d"></span></div>
  </div>
  <div class="rb-group" style="width:228px">
    <span class="alert-dot"></span>
    <div class="rb-body d-flex" style="padding-left:25px">
      <div class="big"><div class="big-ico"><svg width="62" height="62"><use href="#s-route"/></svg></div>按系统布线</div>
    </div>
    <div class="rb-label d-flex align-items-center justify-content-center" style="padding-right:4px">识别桥架内线缆<span class="caret-d"></span></div>
  </div>
  <div class="rb-group" style="width:156px">
    <div class="rb-body d-flex" style="padding-left:24px">
      <div class="big"><div class="big-ico"><svg width="62" height="62"><use href="#s-gt"/></svg></div>表格算量</div>
    </div>
    <div class="rb-label d-flex align-items-center justify-content-center">表格算量</div>
  </div>
  <div class="rb-group" style="width:142px">
    <div class="rb-body d-flex flex-column align-items-center" style="padding-top:85px">
      <span style="white-space:nowrap">检查/显示</span><span class="caret-d" style="margin-top:11px"></span>
    </div>
  </div>
  <div class="rb-group" style="width:228px">
    <div class="rb-body d-flex flex-column align-items-center" style="padding-top:85px">
      <span style="white-space:nowrap">电缆导管二次编辑</span><span class="caret-d" style="margin-top:11px"></span>
    </div>
  </div>
  <div class="red-box" style="top:-30px"></div>
</section>

<section class="prop-bar d-flex">
  <select class="form-select tb-sel tb-gap"><option>第-1层</option></select>
  <select class="form-select tb-sel tb-gap"><option>电气</option></select>
  <select class="form-select tb-sel tb-gap"><option>电缆导管(电)</option></select>
  <select class="form-select tb-sel tb-gap"><option>室外埋地预埋管</option></select>
  <select class="form-select tb-sel tb-gap"><option>分层1</option></select>
  <select class="form-select tb-sel"><option>地下一层电气干</option></select>
  <input class="form-check-input tb-check" type="checkbox">
  <span style="white-space:nowrap">点加长度</span>
  <span class="tb-g" style="margin-left:9px;margin-right:2.5px">长度:</span>
  <input class="form-control tb-inp" style="width:159px" value="0" disabled>
  <span class="tb-g" style="margin-left:1px">mm</span>
  <span class="tb-g" style="margin-left:8px;margin-right:0">反向长度:</span>
  <input class="form-control tb-inp" style="width:159px" value="0" disabled>
  <span class="tb-g" style="margin-left:1px">mm</span>
  <select class="form-select tb-sel" style="width:114px;margin-left:11px"><option>不偏移</option></select>
  <span class="tb-g" style="margin-left:11px;width:36px">X=</span>
  <div class="spin-w"><input class="form-control tb-inp" style="width:121px" value="0"><div class="spin"><span class="caret-u"></span><span class="caret-dn"></span></div></div>
  <span class="tb-g" style="margin-left:3px;width:53px">mm</span>
  <span class="tb-g" style="width:34px">Y=</span>
  <div class="spin-w"><input class="form-control tb-inp" style="width:120px" value="0"><div class="spin"><span class="caret-u"></span><span class="caret-dn"></span></div></div>
  <span class="tb-g" style="margin-left:3px">mm</span>
</section>

<main class="workspace d-flex">
  <aside class="left-col">
    <div class="pan-head d-flex">X</div>
    <div class="nav-title">导航栏</div>
    <div class="nav-tools d-flex align-items-center"><svg><use href="#s-spark"/></svg><svg><use href="#s-edit"/></svg></div>
    <div class="sect sect-a">轴线</div>
    <div class="sect sect-b">电气</div>
    <div class="list-group nav-list">
      <div class="list-group-item"><svg><use href="#s-bulb"/></svg>照明灯具(...</div>
      <div class="list-group-item"><svg><use href="#s-sock"/></svg>开关插座(...</div>
      <div class="list-group-item"><svg><use href="#s-box"/></svg>配电箱柜(...</div>
      <div class="list-group-item"><svg><use href="#s-plug"/></svg>电气设备(...</div>
      <div class="list-group-item"><svg><use href="#s-tray"/></svg>桥架(电)(W)</div>
      <div class="list-group-item"><svg><use href="#s-wire"/></svg>电线导管(...</div>
      <div class="list-group-item active"><svg><use href="#s-cable"/></svg>电缆导管(...</div>
      <div class="list-group-item"><svg><use href="#s-comb"/></svg>综合管线(...</div>
      <div class="list-group-item"><svg><use href="#s-bus"/></svg>母线(电)(I)</div>
      <div class="list-group-item"><svg><use href="#s-lit"/></svg>防雷接地(...</div>
      <div class="list-group-item"><svg><use href="#s-elb"/></svg>桥架通头(...</div>
      <div class="list-group-item"><svg><use href="#s-grid"/></svg>零星构件(...</div>
      <div class="list-group-item"><svg><use href="#s-t"/></svg>支架(电)(N)</div>
    </div>
    <div class="sect">建筑结构</div>
    <div class="sect sect-b">自定义</div>
  </aside>
  <div class="gutter"></div>
  <div class="mid-col">
    <div class="pan-head d-flex">X</div>
    <ul class="nav nav-tabs ptabs">
      <li class="nav-item"><a class="nav-link active" href="#">构件列表</a></li>
      <li class="nav-item"><a class="nav-link" href="#">图纸管理</a></li>
    </ul>
    <div class="mid-tools d-flex">
      <div class="t-it" style="width:118px"><svg><use href="#s-new"/></svg>新建<span class="caret-d caret-s" style="margin-left:9px"></span></div>
      <div class="t-it t-hover"><svg><use href="#s-del"/></svg>删除</div>
      <div class="t-it ms-2" style="width:103px"><svg><use href="#s-copy"/></svg>复制</div>
      <div class="t-it" style="width:128px"><svg><use href="#s-lib"/></svg>构件库</div>
      <div class="t-it"><svg><use href="#s-store"/></svg>构件存盘</div>
      <span class="more-b">▸▸</span>
    </div>
    <div class="mid-search d-flex"><span>搜索构件...</span><svg width="22" height="26"><use href="#s-q"/></svg></div>
    <div class="tree">
      <div class="tree-top"><span class="caret-d"></span>电缆导管(电)</div>
      <div class="tree-sel">[未用] 室外埋地预埋管-RC150 [RC 150]</div>
    </div>
    <div class="pan-b pan-head d-flex">X</div>
    <ul class="nav nav-tabs ptabs short">
      <li class="nav-item"><a class="nav-link active" href="#">属性</a></li>
      <li class="nav-item"><a class="nav-link" href="#">图层管理</a></li>
    </ul>
    <div class="prop-wrap">
      <table class="table table-bordered prop-table">
        <colgroup><col style="width:44px"><col style="width:230px"><col style="width:288px"><col style="width:81px"></colgroup>
        <thead><tr><th></th><th class="text-center">属性名称</th><th class="hd-act">属性值</th><th class="text-center">附加</th></tr></thead>
        <tbody>
          <tr><td class="num">1</td><td class="lnk">名称</td><td>室外埋地预埋管-RC150</td><td></td></tr>
          <tr><td class="num">2</td><td>系统类型</td><td>动力系统</td><td class="chk"><input class="form-check-input" type="checkbox"></td></tr>
          <tr><td class="num">3</td><td class="lnk">导管材质</td><td>RC</td><td class="chk"><input class="form-check-input" type="checkbox" checked></td></tr>
          <tr><td class="num">4</td><td class="lnk">管径(mm)</td><td>150</td><td class="chk"><input class="form-check-input" type="checkbox" checked></td></tr>
          <tr><td class="num num-act">5</td><td>是否计量导管</td><td class="edit">是</td><td class="chk"><input class="form-check-input" type="checkbox"></td></tr>
          <tr><td class="num">6</td><td>所在位置</td><td>室外部分</td><td class="chk"><input class="form-check-input" type="checkbox"></td></tr>
          <tr><td class="num">7</td><td>敷设方式</td><td>室外埋地</td><td class="chk"><input class="form-check-input" type="checkbox"></td></tr>
          <tr><td class="num">8</td><td>电缆规格型号</td><td></td><td class="chk"><input class="form-check-input" type="checkbox" checked></td></tr>
          <tr><td class="num">9</td><td>起点标高(m)</td><td>层顶标高</td><td class="chk"><input class="form-check-input" type="checkbox"></td></tr>
          <tr><td class="num">10</td><td>终点标高(m)</td><td>层顶标高</td><td class="chk"><input class="form-check-input" type="checkbox"></td></tr>
          <tr><td class="num">11</td><td>支架间距(mm)</td><td>0</td><td class="chk"><input class="form-check-input" type="checkbox"></td></tr>
          <tr><td class="num">12</td><td>汇总信息</td><td>电缆导管(电)</td><td class="chk"><input class="form-check-input" type="checkbox"></td></tr>
          <tr><td class="num">13</td><td>备注</td><td></td><td class="chk"><input class="form-check-input" type="checkbox"></td></tr>
          <tr><td class="num">14</td><td><span class="plus">+</span>计算</td><td></td><td></td></tr>
          <tr><td class="num">21</td><td><span class="plus">+</span>配电设置</td><td></td><td></td></tr>
          <tr><td class="num">25</td><td><span class="plus">+</span>剔槽</td><td></td><td></td></tr>
        </tbody>
      </table>
      <div class="scr-thumb"></div>
    </div>
    <button class="btn prop-btn" type="button">提属性</button>
  </div>
  <div class="split-w"><div class="split"><svg width="6" height="14" viewBox="0 0 6 14"><path d="M6 0v14L0 7z" fill="#c8ccd0"/></svg></div></div>
  <div class="canvas-w">
    <svg viewBox="936 338 1937 1320" xmlns="http://www.w3.org/2000/svg" fill="none">
      <g stroke="#808080" stroke-width="2" shape-rendering="crispEdges">
        <path d="M936 891H2873M936 953H2873M936 1077H2873M1965 338V1393M1965 1516V1531M1965 1650V1658M1341 1077V1658M2807 1077V1658"/>
        <path stroke="#707070" stroke-width="3" d="M1248 1077V1658M2713 1077V1658"/>
      </g>
      <path stroke="#6a6a6a" stroke-width="2.5" d="M1576 1047L1455 1168M1703 1132L1455 1379M1703 1343L1455 1589M1703 1553L1596 1660"/>
      <g shape-rendering="crispEdges">
        <path stroke="#e0141e" stroke-width="2" d="M1579 338V1046"/>
        <path stroke="#0a1ee0" stroke-width="2" d="M1579 1046V1658"/>
        <path stroke="#e00000" stroke-width="2" d="M1373 1658V1422H1747V1658M2838 1421H2873"/>
        <path stroke="#c80000" stroke-width="4" d="M2838 1421V1658"/>
        <path stroke="#11e8e8" stroke-width="2" d="M1703 1046V1658"/>
        <path stroke="#00b4b4" stroke-width="4" d="M1454 1658V1046H1703"/>
        <path stroke="#00f0f0" stroke-width="3" d="M2867 1100V1658"/>
      </g>
      <g stroke="#00e000" stroke-width="2.5">
        <path stroke="#0f0" d="M936 483H1315"/>
        <path d="M1315 483L2866 950"/>
        <path d="M1315 483L1460 952"/>
        <path d="M1385 1658L1404 1592L1426 1658"/>
        <path d="M1532 1592H1484L1469 1617V1658"/>
        <path d="M1563 1619L1578 1592H1612L1628 1620V1646L1618 1660"/>
        <path d="M2850 1660L2866 1604L2873 1592"/>
      </g>
      <g shape-rendering="crispEdges">
        <path fill="#0f0" d="M1025 1522L1035 1500L1045 1522H1039V1552H1031V1522z"/>
        <path fill="#f00" d="M1047 1552H1072V1546L1095 1558L1072 1570V1564H1047z"/>
      </g>
      <ellipse cx="1035" cy="1558" rx="11" ry="12" fill="#00f"/>
      <text x="1027" y="1496" fill="#0f0" font-size="30" font-family="Liberation Sans,sans-serif">Y</text>
      <text x="1098" y="1569" fill="#f00" font-size="32" font-family="Liberation Sans,sans-serif">X</text>
    </svg>
    <div class="r-split"></div>
    <div class="view-strip">
      <svg><use href="#s-orbit"/></svg>
      <svg style="margin-top:13px"><use href="#s-3d"/></svg>
      <svg style="margin-top:14px"><use href="#s-ctop"/></svg>
      <span class="caret-dn"></span>
      <svg><use href="#s-cfull"/></svg>
      <span class="caret-dn"></span>
      <svg><use href="#s-rotv"/></svg>
      <span class="caret-dn"></span>
      <div class="vs-sep"></div>
      <svg><use href="#s-doce"/></svg>
    </div>
    <div class="cmd"><svg width="30" height="36" viewBox="0 0 30 36"><path fill="none" stroke="#fff" stroke-width="2" d="M16 17V3M16 17h12M16 17L28 3M1 32l12-14M13 18H3M13 18v16"/></svg><span>指定第一点</span></div>
  </div>
</main>

<footer class="status-b d-flex">
  <span class="st-txt" style="width:238px">层高： 3.2</span>
  <span class="st-txt" style="width:279px">底标高： -3.2</span>
  <span class="st-txt" style="width:220px">选中图元： 0</span>
  <span class="st-txt" style="width:221px">隐藏图元： 0</span>
  <div class="d-flex" style="gap:7.5px">
    <button class="btn st-btn" style="width:49px" type="button"><svg><use href="#b-a"/></svg></button>
    <button class="btn st-btn" style="width:49px" type="button"><svg><use href="#b-l"/></svg></button>
    <button class="btn st-btn on" style="width:70px" type="button"><svg><use href="#b-r"/></svg><span class="caret-d caret-s"></span></button>
    <button class="btn st-btn" style="width:70px" type="button"><svg><use href="#b-c"/></svg><span class="caret-d caret-s"></span></button>
    <button class="btn st-btn" style="width:48px" type="button"><svg><use href="#b-x"/></svg></button>
    <button class="btn st-btn" style="width:70px" type="button"><svg><use href="#b-ang"/></svg><span class="caret-d caret-s"></span></button>
    <button class="btn st-btn" style="width:70px" type="button"><svg><use href="#b-plus"/></svg><span class="caret-d caret-s"></span></button>
    <button class="btn st-btn" style="width:48px" type="button"><svg><use href="#b-ph"/></svg></button>
    <button class="btn st-btn" style="width:48px" type="button"><svg><use href="#b-arc"/></svg></button>
  </div>
  <span class="st-txt" style="margin-left:17px;width:223px">CAD图亮度： 100%</span>
  <button class="btn st-btn" style="width:49px" type="button"><svg><use href="#b-min"/></svg></button>
  <div class="track"></div><div class="thumb-v"></div>
  <button class="btn st-btn" style="width:49px" type="button"><svg><use href="#b-pls"/></svg></button>
</footer>
<div class="strip"><i></i></div>
</body>
</html>
